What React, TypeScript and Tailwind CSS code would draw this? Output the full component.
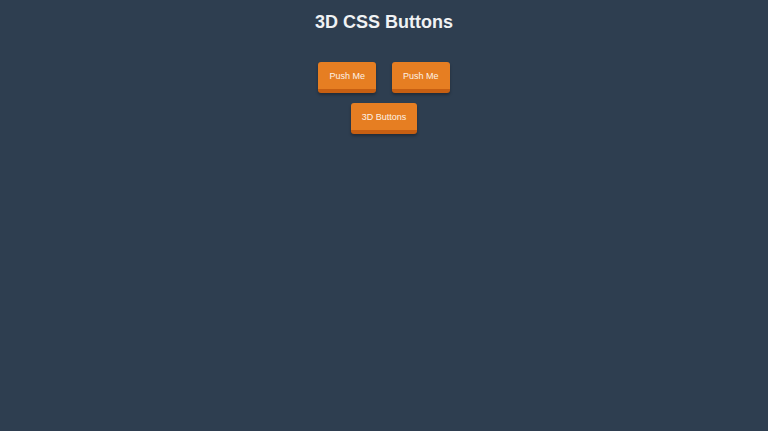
import React from "react";

function PushButton({ label }: { label: string }) {
  return (
    <button className="h-[31px] rounded-[3px] border-b-4 border-[#c75f12] bg-[#e67e22] px-[11px] pt-[1px] text-[9px] leading-none text-[#fdf2e6] shadow-[0_2px_3px_rgba(0,0,0,0.3)]">
      {label}
    </button>
  );
}

export default function App() {
  return (
    <div className="min-h-screen bg-[#2e3e50] font-['Liberation_Sans',Arial,sans-serif]">
      <h1 className="pt-[11px] text-center text-[18px] font-bold leading-[22px] text-[#f0f2f4]">
        3D CSS Buttons
      </h1>
      <div className="mt-[29px] flex flex-col items-center gap-[10px]">
        <div className="flex gap-[16px]">
          <PushButton label="Push Me" />
          <PushButton label="Push Me" />
        </div>
        <PushButton label="3D Buttons" />
      </div>
    </div>
  );
}
